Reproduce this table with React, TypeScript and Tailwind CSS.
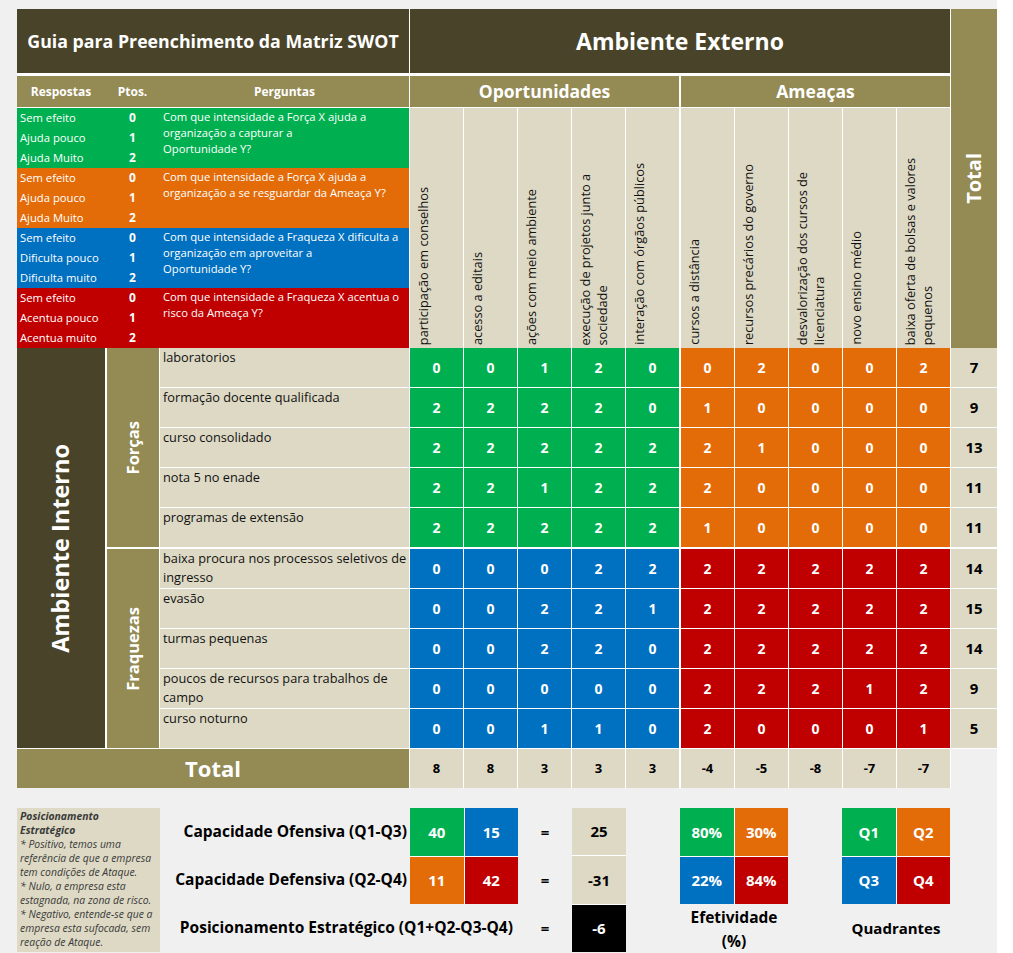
import React from 'react'

const opp = [
  ['participação em conselhos'],
  ['acesso a editais'],
  ['ações com meio ambiente'],
  ['execução de projetos junto a', 'sociedade'],
  ['interação com órgãos públicos'],
]

const threats = [
  ['cursos a distância'],
  ['recursos precários do governo'],
  ['desvalorização dos cursos de', 'licenciatura'],
  ['novo ensino médio'],
  ['baixa oferta de bolsas e valores', 'pequenos'],
]

const legend = [
  {
    bg: 'bg-[#00b050]',
    items: [['Sem efeito', '0'], ['Ajuda pouco', '1'], ['Ajuda Muito', '2']],
    q: ['Com que intensidade a Força X ajuda a', 'organização a capturar a', 'Oportunidade Y?'],
  },
  {
    bg: 'bg-[#e36c09]',
    items: [['Sem efeito', '0'], ['Ajuda pouco', '1'], ['Ajuda Muito', '2']],
    q: ['Com que intensidade a Força X ajuda a', 'organização a se resguardar da Ameaça Y?'],
  },
  {
    bg: 'bg-[#0070c0]',
    items: [['Sem efeito', '0'], ['Dificulta pouco', '1'], ['Dificulta muito', '2']],
    q: ['Com que intensidade a Fraqueza X dificulta a', 'organização em aproveitar a', 'Oportunidade Y?'],
  },
  {
    bg: 'bg-[#c00000]',
    items: [['Sem efeito', '0'], ['Acentua pouco', '1'], ['Acentua muito', '2']],
    q: ['Com que intensidade a Fraqueza X acentua o', 'risco da Ameaça Y?'],
  },
]

type Item = { name: string[]; v: number[]; total: number }

const forcas: Item[] = [
  { name: ['laboratorios'], v: [0, 0, 1, 2, 0, 0, 2, 0, 0, 2], total: 7 },
  { name: ['formação docente qualificada'], v: [2, 2, 2, 2, 0, 1, 0, 0, 0, 0], total: 9 },
  { name: ['curso consolidado'], v: [2, 2, 2, 2, 2, 2, 1, 0, 0, 0], total: 13 },
  { name: ['nota 5 no enade'], v: [2, 2, 1, 2, 2, 2, 0, 0, 0, 0], total: 11 },
  { name: ['programas de extensão'], v: [2, 2, 2, 2, 2, 1, 0, 0, 0, 0], total: 11 },
]

const fraquezas: Item[] = [
  { name: ['baixa procura nos processos seletivos de', 'ingresso'], v: [0, 0, 0, 2, 2, 2, 2, 2, 2, 2], total: 14 },
  { name: ['evasão'], v: [0, 0, 2, 2, 1, 2, 2, 2, 2, 2], total: 15 },
  { name: ['turmas pequenas'], v: [0, 0, 2, 2, 0, 2, 2, 2, 2, 2], total: 14 },
  { name: ['poucos de recursos para trabalhos de', 'campo'], v: [0, 0, 0, 0, 0, 2, 2, 2, 1, 2], total: 9 },
  { name: ['curso noturno'], v: [0, 0, 1, 1, 0, 2, 0, 0, 0, 1], total: 5 },
]

const colTotals = [8, 8, 3, 3, 3, -4, -5, -8, -7, -7]

function HeaderCell({ lines }: { lines: string[] }) {
  return (
    <div className="w-[53px] h-[240px] bg-[#ddd9c4] flex items-end pl-[5px] pb-[3px]">
      <div className="[writing-mode:vertical-rl] rotate-180 whitespace-nowrap text-[12.75px] leading-[17px] text-[#111]">
        {lines.map((l, i) => (
          <div key={i}>{l}</div>
        ))}
      </div>
    </div>
  )
}

function ValueCell({ value, bg }: { value: number; bg: string }) {
  return (
    <div className={`w-[53px] h-[39px] flex items-center justify-center text-white font-bold text-[14px] ${bg}`}>
      {value}
    </div>
  )
}

function Group({ label, items, oppBg, thrBg }: { label: string; items: Item[]; oppBg: string; thrBg: string }) {
  return (
    <div className="flex gap-px">
      <div className="w-[52px] h-[199px] bg-[#948a54] flex items-center justify-center">
        <div className="[writing-mode:vertical-rl] rotate-180 whitespace-nowrap text-white font-bold text-[16.5px]">
          {label}
        </div>
      </div>
      <div className="flex flex-col gap-px">
        {items.map((it) => (
          <div key={it.name[0]} className="flex gap-px h-[39px]">
            <div className="w-[249px] bg-[#ddd9c4] pl-[3px] text-[12.75px] leading-[19px] text-[#111] whitespace-nowrap">
              {it.name.map((l, i) => (
                <div key={i}>{l}</div>
              ))}
            </div>
            <div className="flex gap-[2px]">
              <div className="flex gap-px">
                {it.v.slice(0, 5).map((v, i) => (
                  <ValueCell key={i} value={v} bg={oppBg} />
                ))}
              </div>
              <div className="flex gap-px">
                {it.v.slice(5).map((v, i) => (
                  <ValueCell key={i} value={v} bg={thrBg} />
                ))}
              </div>
            </div>
            <div className="w-[46px] bg-[#ddd9c4] flex items-center justify-center font-bold text-[15px] text-black">
              {it.total}
            </div>
          </div>
        ))}
      </div>
    </div>
  )
}

function Quad({ cells }: { cells: [string, string][] }) {
  return (
    <div className="col-span-2 row-span-2 grid grid-cols-2 grid-rows-2 gap-px bg-white">
      {cells.map(([t, bg]) => (
        <div key={t + bg} className={`flex items-center justify-center text-white font-bold text-[15px] ${bg}`}>
          {t}
        </div>
      ))}
    </div>
  )
}

export default function App() {
  return (
    <div className="min-h-screen w-full bg-white font-['Open_Sans',sans-serif]">
      <div className="w-[997px] min-h-[953px] bg-[#f0f0f0] pl-[17px] pt-[9px]">
        {/* main matrix */}
        <div className="w-[980px] bg-white flex flex-col">
          <div className="flex gap-px">
            <div className="w-[392px] flex flex-col">
              <div className="h-[64px] bg-[#494429] flex items-center justify-center text-white font-bold text-[17.75px]">
                Guia para Preenchimento da Matriz SWOT
              </div>
              <div className="mt-[3px] h-[31px] bg-[#948a54] flex items-center text-white font-bold text-[12px]">
                <div className="w-[88px] text-center">Respostas</div>
                <div className="w-[55px] text-center">Ptos.</div>
                <div className="flex-1 text-center">Perguntas</div>
              </div>
              <div className="mt-px flex flex-col">
                {legend.map((g) => (
                  <div key={g.q[0] + g.bg} className={`h-[60px] flex text-white text-[11.25px] ${g.bg}`}>
                    <div className="w-[143px] flex flex-col">
                      {g.items.map(([a, p]) => (
                        <div key={a} className="h-[20px] flex items-center">
                          <div className="w-[88px] pl-[3px]">{a}</div>
                          <div className="w-[55px] text-center font-bold text-[12px]">{p}</div>
                        </div>
                      ))}
                    </div>
                    <div className="flex-1 pl-[3px] pt-px leading-[16px] whitespace-nowrap">
                      {g.q.map((l) => (
                        <div key={l}>{l}</div>
                      ))}
                    </div>
                  </div>
                ))}
              </div>
            </div>

            <div className="w-[540px] flex flex-col">
              <div className="h-[64px] bg-[#494429] flex items-center justify-center text-white font-bold text-[23px]">
                Ambiente Externo
              </div>
              <div className="mt-[3px] flex gap-[2px] text-white font-bold text-[17.5px]">
                <div className="w-[269px] h-[31px] bg-[#948a54] flex items-center justify-center">Oportunidades</div>
                <div className="w-[269px] h-[31px] bg-[#948a54] flex items-center justify-center">Ameaças</div>
              </div>
              <div className="mt-px flex gap-[2px]">
                <div className="flex gap-px">
                  {opp.map((l) => (
                    <HeaderCell key={l[0]} lines={l} />
                  ))}
                </div>
                <div className="flex gap-px">
                  {threats.map((l) => (
                    <HeaderCell key={l[0]} lines={l} />
                  ))}
                </div>
              </div>
            </div>

            <div className="w-[46px] h-[339px] bg-[#948a54] flex items-center justify-center">
              <div className="[writing-mode:vertical-rl] rotate-180 text-white font-bold text-[20px]">Total</div>
            </div>
          </div>

          <div className="flex gap-[2px]">
            <div className="w-[88px] h-[400px] bg-[#494429] flex items-center justify-center">
              <div className="[writing-mode:vertical-rl] rotate-180 whitespace-nowrap text-white font-bold text-[23.5px]">
                Ambiente Interno
              </div>
            </div>
            <div className="flex flex-col gap-[2px]">
              <Group label="Forças" items={forcas} oppBg="bg-[#00b050]" thrBg="bg-[#e36c09]" />
              <Group label="Fraquezas" items={fraquezas} oppBg="bg-[#0070c0]" thrBg="bg-[#c00000]" />
            </div>
          </div>

          <div className="mt-px flex gap-px h-[39px]">
            <div className="w-[392px] bg-[#948a54] flex items-center justify-center text-white font-bold text-[22px]">
              Total
            </div>
            <div className="flex gap-[2px]">
              <div className="flex gap-px">
                {colTotals.slice(0, 5).map((v, i) => (
                  <div key={i} className="w-[53px] bg-[#ddd9c4] flex items-center justify-center font-bold text-[13px] text-black">
                    {v}
                  </div>
                ))}
              </div>
              <div className="flex gap-px">
                {colTotals.slice(5).map((v, i) => (
                  <div key={i} className="w-[53px] bg-[#ddd9c4] flex items-center justify-center font-bold text-[13px] text-black">
                    {v}
                  </div>
                ))}
              </div>
            </div>
            <div className="w-[46px] bg-[#f0f0f0]" />
          </div>
        </div>

        {/* strategic summary */}
        <div className="mt-[20px] grid grid-cols-[143px_250px_repeat(10,54px)] grid-rows-[48px_48px_48px]">
          <div className="row-span-3 bg-[#ddd9c4] px-[3px] pt-px text-[10.4px] leading-[14px] italic text-[#3a3a3a] whitespace-nowrap">
            <div className="font-bold">Posicionamento</div>
            <div className="font-bold">Estratégico</div>
            <div>* Positivo, temos uma</div>
            <div>referência de que a empresa</div>
            <div>tem condições de Ataque.</div>
            <div>* Nulo, a empresa esta</div>
            <div>estagnada, na zona de risco.</div>
            <div>* Negativo, entende-se que a</div>
            <div>empresa esta sufocada, sem</div>
            <div>reação de Ataque.</div>
          </div>

          <div className="col-start-2 row-start-1 flex items-center justify-end pr-[3px] font-bold text-[15.5px] text-black whitespace-nowrap">
            Capacidade Ofensiva (Q1-Q3)
          </div>
          <div className="col-start-3 row-start-1 col-span-2 row-span-2 grid grid-cols-2 grid-rows-2 gap-px bg-white">
            <div className="bg-[#00b050] flex items-center justify-center text-white font-bold text-[15px]">40</div>
            <div className="bg-[#0070c0] flex items-center justify-center text-white font-bold text-[15px]">15</div>
            <div className="bg-[#e36c09] flex items-center justify-center text-white font-bold text-[15px]">11</div>
            <div className="bg-[#c00000] flex items-center justify-center text-white font-bold text-[15px]">42</div>
          </div>
          <div className="col-start-5 row-start-1 flex items-center justify-center font-bold text-[15px]">=</div>
          <div className="col-start-6 row-start-1 row-span-3 flex flex-col gap-px bg-white">
            <div className="flex-1 bg-[#ddd9c4] flex items-center justify-center font-bold text-[15px] text-black">25</div>
            <div className="flex-1 bg-[#ddd9c4] flex items-center justify-center font-bold text-[15px] text-black">-31</div>
            <div className="flex-1 bg-black flex items-center justify-center font-bold text-[15px] text-white">-6</div>
          </div>

          <div className="col-start-8 row-start-1 col-span-2 row-span-2 grid">
            <Quad
              cells={[
                ['80%', 'bg-[#00b050]'],
                ['30%', 'bg-[#e36c09]'],
                ['22%', 'bg-[#0070c0]'],
                ['84%', 'bg-[#c00000]'],
              ]}
            />
          </div>
          <div className="col-start-11 row-start-1 col-span-2 row-span-2 grid">
            <Quad
              cells={[
                ['Q1', 'bg-[#00b050]'],
                ['Q2', 'bg-[#e36c09]'],
                ['Q3', 'bg-[#0070c0]'],
                ['Q4', 'bg-[#c00000]'],
              ]}
            />
          </div>

          <div className="col-start-2 row-start-2 flex items-center justify-end pr-[3px] font-bold text-[15.5px] text-black whitespace-nowrap">
            Capacidade Defensiva (Q2-Q4)
          </div>
          <div className="col-start-5 row-start-2 flex items-center justify-center font-bold text-[15px]">=</div>

          <div className="col-start-2 row-start-3 col-span-3 flex items-center justify-end pr-[5px] font-bold text-[15.5px] text-black whitespace-nowrap">
            Posicionamento Estratégico (Q1+Q2-Q3-Q4)
          </div>
          <div className="col-start-5 row-start-3 flex items-center justify-center font-bold text-[15px]">=</div>
          <div className="col-start-8 row-start-3 col-span-2 flex flex-col items-center pt-px font-bold text-[15.5px] leading-[24px] text-black">
            <div>Efetividade</div>
            <div>(%)</div>
          </div>
          <div className="col-start-11 row-start-3 col-span-2 flex items-center justify-center font-bold text-[15px] text-black">
            Quadrantes
          </div>
        </div>
      </div>
    </div>
  )
}
